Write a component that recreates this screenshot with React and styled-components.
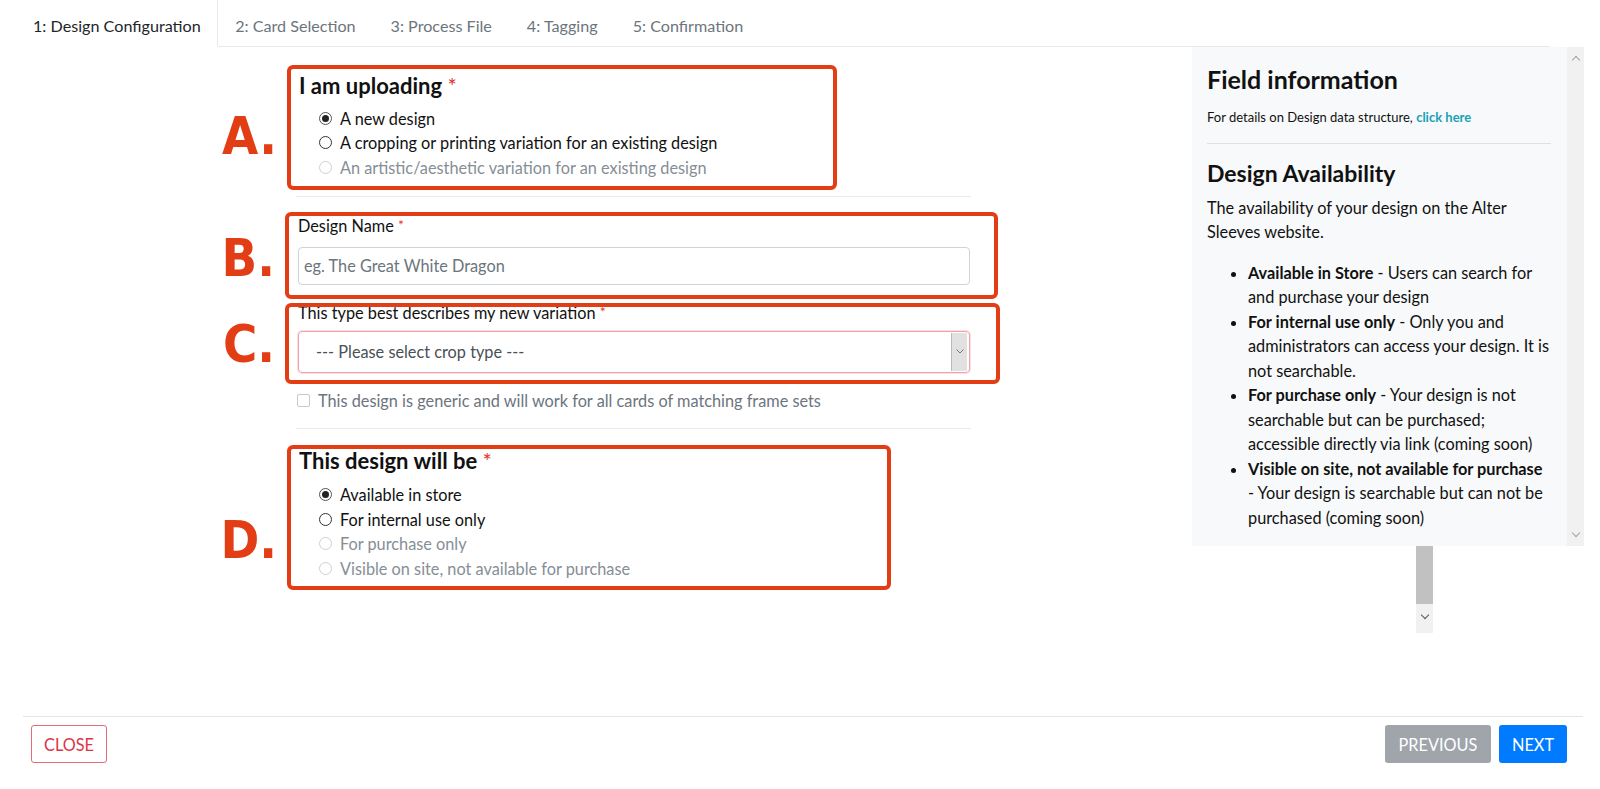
import React from 'react'
import styled, { createGlobalStyle, css } from 'styled-components'

const GlobalStyle = createGlobalStyle`
  html, body {
    margin: 0;
    padding: 0;
    background: #fff;
  }
  body {
    font-family: Lato, "Open Sans", "Liberation Sans", sans-serif;
    color: #212529;
  }
  * { box-sizing: border-box; }
`

const tabs = ['1: Design Configuration', '2: Card Selection', '3: Process File', '4: Tagging', '5: Confirmation']

const uploadOptions = [
  { label: 'A new design', checked: true },
  { label: 'A cropping or printing variation for an existing design' },
  { label: 'An artistic/aesthetic variation for an existing design', disabled: true },
]

const availabilityOptions = [
  { label: 'Available in store', checked: true },
  { label: 'For internal use only' },
  { label: 'For purchase only', disabled: true },
  { label: 'Visible on site, not available for purchase', disabled: true },
]

const infoItems = [
  { title: 'Available in Store', text: 'Users can search for and purchase your design' },
  { title: 'For internal use only', text: 'Only you and administrators can access your design. It is not searchable.' },
  { title: 'For purchase only', text: 'Your design is not searchable but can be purchased; accessible directly via link (coming soon)' },
  { title: 'Visible on site, not available for purchase', text: 'Your design is searchable but can not be purchased (coming soon)' },
]

function Options({ items }) {
  return items.map(o => (
    <Option key={o.label} $disabled={o.disabled}>
      <RadioMark $checked={o.checked} $disabled={o.disabled} />
      {o.label}
    </Option>
  ))
}

function App() {
  return (
    <Page>
      <GlobalStyle />
      <TabBar>
        {tabs.map((t, i) => (
          <Tab key={t} $active={i === 0}>{t}</Tab>
        ))}
        <TabFill />
      </TabBar>

      <Main>
        <FormColumn>
          <AnnotBox $width={550} $shift={10} $pad="4px 8px 6px 8px">
            <Letter $top={41}>A.</Letter>
            <GroupTitle>I am uploading <Req>*</Req></GroupTitle>
            <Options items={uploadOptions} />
          </AnnotBox>

          <Rule $top={6} $bottom={15} />

          <AnnotBox $width={713} $shift={12} $pad="0 0 10px 9px">
            <Letter $top={16}>B.</Letter>
            <FieldLabel $top={-1}>Design Name <Req $small>*</Req></FieldLabel>
            <TextInput placeholder="eg. The Great White Dragon" />
          </AnnotBox>

          <AnnotBox $width={715} $shift={12} $pad="0 0 7px 9px" $space={4}>
            <Letter $top={11}>C.</Letter>
            <FieldLabel $top={-5} $bottom={8}>This type best describes my new variation <Req $small>*</Req></FieldLabel>
            <SelectBox>
              <span>--- Please select crop type ---</span>
              <SelectArrow>
                <svg width="8" height="5" viewBox="0 0 8 5">
                  <path d="M0.5 0.5 L4 4 L7.5 0.5" fill="none" stroke="#777" strokeWidth="1" />
                </svg>
              </SelectArrow>
            </SelectBox>
          </AnnotBox>

          <CheckRow>
            <CheckMark />
            This design is generic and will work for all cards of matching frame sets
          </CheckRow>

          <Rule $top={17} $bottom={16} />

          <AnnotBox $width={604} $shift={10} $pad="0 8px 5px 8px">
            <Letter $top={65}>D.</Letter>
            <GroupTitle $tight>This design will be <Req>*</Req></GroupTitle>
            <Options items={availabilityOptions} />
          </AnnotBox>
        </FormColumn>

        <SideColumn>
          <PanelRow>
            <InfoPanel>
              <PanelTitle $size={25}>Field information</PanelTitle>
              <SmallNote>
                For details on Design data structure, <InfoLink href="#">click here</InfoLink>
              </SmallNote>
              <PanelRule />
              <PanelTitle $size={23} $second>Design Availability</PanelTitle>
              <PanelText>The availability of your design on the Alter Sleeves website.</PanelText>
              <InfoList>
                {infoItems.map(it => (
                  <li key={it.title}>
                    <strong>{it.title}</strong> - {it.text}
                  </li>
                ))}
              </InfoList>
            </InfoPanel>
            <Scrollbar>
              <Chevron $up />
              <Chevron />
            </Scrollbar>
          </PanelRow>
          <MiniScroll>
            <MiniThumb />
            <Chevron $small />
          </MiniScroll>
        </SideColumn>
      </Main>

      <Footer>
        <CloseButton>Close</CloseButton>
        <FooterRight>
          <ActionButton $variant="secondary">Previous</ActionButton>
          <ActionButton $variant="primary">Next</ActionButton>
        </FooterRight>
      </Footer>
    </Page>
  )
}

export default App

const Page = styled.div`
  display: flex;
  flex-direction: column;
  height: 789px;
  overflow: hidden;
`

const TabBar = styled.div`
  display: flex;
  height: 47px;
  flex: none;
`

const Tab = styled.div`
  padding: 6px 17.5px 0 17.5px;
  line-height: 40px;
  font-size: 16.15px;
  color: #6c757d;
  border-bottom: 1px solid #e6e8ea;
  white-space: nowrap;
  ${p => p.$active && css`
    padding: 6px 16px 0 33px;
    color: #212529;
    border-bottom-color: transparent;
    border-right: 1px solid #e6e8ea;
  `}
`

const TabFill = styled.div`
  flex: 1;
  border-bottom: 1px solid #e6e8ea;
  margin-right: 50px;
`

const Main = styled.div`
  flex: 1;
  display: flex;
  min-height: 0;
`

const FormColumn = styled.div`
  width: 674px;
  margin-left: 297px;
  padding-top: 18px;
  display: flex;
  flex-direction: column;
  align-items: flex-start;
`

const AnnotBox = styled.div`
  position: relative;
  width: ${p => p.$width}px;
  margin-left: -${p => p.$shift}px;
  margin-top: ${p => p.$space || 0}px;
  padding: ${p => p.$pad};
  border: 4px solid transparent;
  display: flex;
  flex-direction: column;

  &::after {
    content: '';
    position: absolute;
    inset: -4px;
    border: 4px solid #e23d14;
    border-radius: 6px;
    pointer-events: none;
  }
`

const Letter = styled.div`
  position: absolute;
  right: calc(100% + 14px);
  top: ${p => p.$top}px;
  font-family: "DejaVu Sans Condensed", "DejaVu Sans", sans-serif;
  font-stretch: condensed;
  font-weight: 700;
  font-size: 52px;
  line-height: 1;
  color: #e23d14;
`

const GroupTitle = styled.div`
  font-size: 22px;
  font-weight: 700;
  line-height: 26px;
  margin-top: ${p => (p.$tight ? '-1px' : '0')};
  margin-bottom: ${p => (p.$tight ? '9px' : '7px')};
  color: #111;
`

const Req = styled.span`
  color: #e3342f;
  font-weight: 400;
  ${p => p.$small && css`
    font-size: 14px;
    vertical-align: 2px;
  `}
`

const Option = styled.div`
  display: flex;
  align-items: center;
  gap: 8px;
  height: 24.5px;
  padding-left: 20px;
  font-size: 16.3px;
  color: ${p => (p.$disabled ? '#868e96' : '#111')};
`

const RadioMark = styled.span`
  position: relative;
  flex: none;
  width: 13px;
  height: 13px;
  border-radius: 50%;
  background: #fff;
  border: 1px solid ${p => (p.$disabled ? '#cfcfcf' : '#333')};
  ${p => p.$checked && css`
    border-color: #555;
    &::after {
      content: '';
      position: absolute;
      inset: 2px;
      border-radius: 50%;
      background: #222;
    }
  `}
`

const Rule = styled.div`
  width: 675px;
  margin-left: -1px;
  height: 1px;
  background: #e9ecef;
  margin-top: ${p => p.$top}px;
  margin-bottom: ${p => p.$bottom}px;
`

const FieldLabel = styled.div`
  font-size: 16.3px;
  line-height: 20px;
  color: #111;
  margin-top: ${p => p.$top || 0}px;
  margin-bottom: ${p => p.$bottom || 11}px;
`

const TextInput = styled.input`
  width: 672px;
  height: 38px;
  border: 1px solid #ced4da;
  border-radius: 4px;
  padding: 0 5px;
  font-family: inherit;
  font-size: 16.3px;
  color: #495057;
  outline: none;
  &::placeholder {
    color: #6c757d;
  }
`

const SelectBox = styled.div`
  width: 672px;
  height: 42px;
  display: flex;
  align-items: center;
  justify-content: space-between;
  padding: 0 2px 0 17px;
  border: 1px solid #f1a1a8;
  border-radius: 4px;
  box-shadow: 0 0 0 1px rgba(241, 161, 168, 0.35);
  font-size: 16.3px;
  color: #495057;
`

const SelectArrow = styled.span`
  width: 16px;
  height: 38px;
  display: flex;
  align-items: center;
  justify-content: center;
  background: #e1e1e1;
  border-left: 1px solid #b9b9b9;
`

const CheckRow = styled.div`
  display: flex;
  align-items: center;
  gap: 8px;
  margin-top: 7px;
  height: 20px;
  font-size: 16.3px;
  color: #6c757d;
`

const CheckMark = styled.span`
  width: 13px;
  height: 13px;
  border: 1px solid #c8c8c8;
  border-radius: 2px;
  background: #fff;
`

const SideColumn = styled.div`
  margin-left: auto;
  margin-right: 16px;
  width: 392px;
  display: flex;
  flex-direction: column;
`

const PanelRow = styled.div`
  display: flex;
  height: 499px;
`

const InfoPanel = styled.div`
  flex: 1;
  background: #f8f9fa;
  padding: 18px 16px 0 15px;
  overflow: hidden;
`

const PanelTitle = styled.div`
  font-size: ${p => p.$size}px;
  font-weight: 700;
  line-height: 29px;
  color: #111;
  margin-top: ${p => (p.$second ? '15px' : '0')};
`

const SmallNote = styled.div`
  font-size: 13px;
  line-height: 19.5px;
  margin-top: 14px;
  color: #111;
`

const InfoLink = styled.a`
  color: #17a2b8;
  font-weight: 700;
  text-decoration: none;
`

const PanelRule = styled.div`
  height: 1px;
  background: #dee2e6;
  margin-top: 15px;
`

const PanelText = styled.p`
  font-size: 16.3px;
  line-height: 24.5px;
  margin: 8px 0 16px;
  color: #111;
`

const InfoList = styled.ul`
  margin: 0;
  padding-left: 41px;
  font-size: 16.3px;
  line-height: 24.5px;
  color: #111;

  strong {
    font-weight: 700;
  }
`

const Scrollbar = styled.div`
  width: 17px;
  background: #f1f1f1;
  display: flex;
  flex-direction: column;
  justify-content: space-between;
  align-items: center;
  padding: 8px 0;
`

const Chevron = styled.span`
  width: 6px;
  height: 6px;
  border-left: 1.5px solid #a3a3a3;
  border-top: 1.5px solid #a3a3a3;
  transform: ${p => (p.$up ? 'translateY(2px) rotate(45deg)' : 'translateY(-2px) rotate(225deg)')};
  ${p => p.$small && css`
    border-color: #555;
    margin: 10px auto 0;
  `}
`

const MiniScroll = styled.div`
  width: 17px;
  height: 87px;
  margin-left: 224px;
  background: #f1f1f1;
  display: flex;
  flex-direction: column;
`

const MiniThumb = styled.div`
  height: 58px;
  background: #c1c1c1;
`

const Footer = styled.div`
  flex: none;
  height: 73px;
  margin: 0 17px 0 23px;
  border-top: 1px solid #e5e5e5;
  padding: 8px 16px 0 8px;
  display: flex;
  justify-content: space-between;
  align-items: flex-start;
`

const FooterRight = styled.div`
  display: flex;
  gap: 8px;
`

const buttonBase = css`
  height: 38px;
  border-radius: 3px;
  font-family: Lato, "Open Sans", sans-serif;
  font-size: 16.3px;
  text-transform: uppercase;
  cursor: pointer;
`

const CloseButton = styled.button`
  ${buttonBase}
  width: 76px;
  padding: 0;
  background: #fff;
  color: #dc3545;
  border: 1px solid #e66b77;
`

const ActionButton = styled.button`
  ${buttonBase}
  width: ${p => (p.$variant === 'primary' ? '68px' : '106px')};
  padding: 0;
  border: none;
  color: #fff;
  background: ${p => (p.$variant === 'primary' ? '#007bff' : '#9fa5aa')};
`
